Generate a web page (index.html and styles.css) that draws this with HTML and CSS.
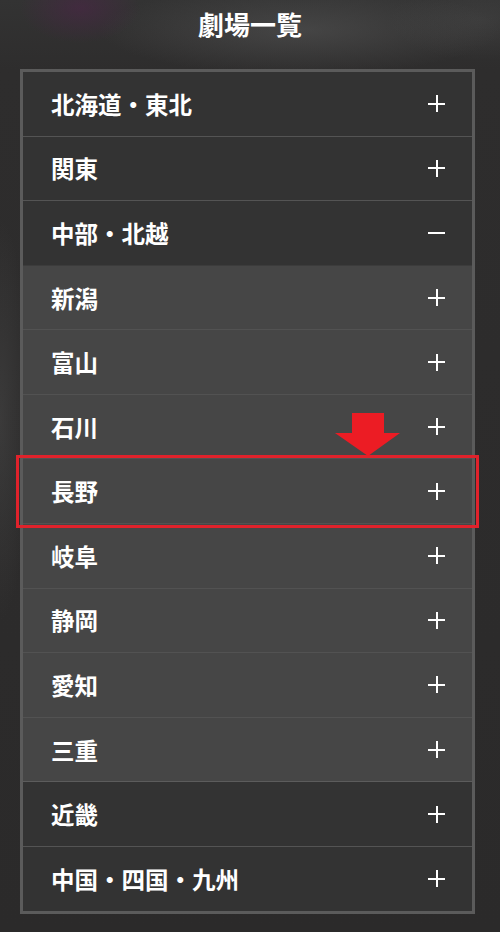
FILE: index.html
```html
<!DOCTYPE html>
<html lang="ja">
<head>
    <meta charset="UTF-8">
    <meta name="viewport" content="width=device-width, initial-scale=1.0">
    <title>劇場一覧</title>
    <link rel="stylesheet" href="styles.css">
</head>
<body>
    <h1 class="title">劇場一覧</h1>

    <div class="theater-list">
        <div class="area">北海道・東北<span class="toggle plus"></span></div>
        <div class="area">関東<span class="toggle plus"></span></div>
        <div class="area">中部・北越<span class="toggle minus"></span></div>
        <div class="sub-list">
            <div class="pref">新潟<span class="toggle plus"></span></div>
            <div class="pref">富山<span class="toggle plus"></span></div>
            <div class="pref">石川<span class="toggle plus"></span></div>
            <div class="pref marked">長野<span class="toggle plus"></span>
                <div class="highlight"></div>
                <svg class="pointer" width="65" height="43" viewBox="0 0 65 43">
                    <polygon points="17,0 49,0 49,20 65,20 33,43 0,20 17,20" fill="#ec1c24"/>
                </svg>
            </div>
            <div class="pref">岐阜<span class="toggle plus"></span></div>
            <div class="pref">静岡<span class="toggle plus"></span></div>
            <div class="pref">愛知<span class="toggle plus"></span></div>
            <div class="pref">三重<span class="toggle plus"></span></div>
        </div>
        <div class="area">近畿<span class="toggle plus"></span></div>
        <div class="area">中国・四国・九州<span class="toggle plus"></span></div>
    </div>
</body>
</html>
```

FILE: styles.css
```css
body {
    margin: 0;
    min-height: 932px;
    font-family: "Noto Sans CJK JP", "Noto Sans", sans-serif;
    color: #fff;
    background-color: #2c2b2b;
    background-image:
        radial-gradient(ellipse 60px 35px at 80px 8px, rgba(80, 35, 75, 0.5), transparent),
        radial-gradient(ellipse 200px 45px at 300px 30px, rgba(90, 90, 90, 0.5), transparent),
        radial-gradient(ellipse 90px 40px at 480px 20px, rgba(80, 80, 80, 0.35), transparent),
        radial-gradient(ellipse 30px 200px at 0 420px, rgba(80, 80, 80, 0.4), transparent),
        linear-gradient(#333 0, #2e2d2d 70px, #2b2a2a 100%);
    overflow: hidden;
}
.title {
    margin: 0;
    padding: 7px 0 0;
    height: 69px;
    box-sizing: border-box;
    text-align: center;
    font-size: 26px;
    line-height: 34px;
    font-weight: 700;
}
.theater-list {
    width: 455px;
    margin-left: 20px;
    box-sizing: border-box;
    border: 3px solid #5b5b5b;
    background: #333;
}
.area,
.pref {
    position: relative;
    display: flex;
    align-items: center;
    justify-content: space-between;
    height: 63.58px;
    padding: 0 27px 0 28px;
    font-size: 23.5px;
    font-weight: 700;
    border-top: 1px solid #545454;
}
.area:first-child {
    border-top: none;
}
.area {
    background: #333;
}
.pref {
    background: #464646;
    border-top-color: #525252;
}
.pref.marked {
    z-index: 1;
}
.sub-list {
    border-bottom: 1px solid #5c5c5c;
}
.sub-list .pref:first-child {
    border-top-color: #3c3c3c;
}
.sub-list + .area {
    border-top: none;
}
.toggle {
    position: relative;
    width: 17px;
    height: 17px;
}
.toggle::before,
.toggle::after {
    content: "";
    position: absolute;
    background: #fff;
}
.toggle::before {
    left: 0;
    right: 0;
    top: 7.5px;
    height: 2px;
}
.plus::after {
    top: 0;
    bottom: 0;
    left: 7.5px;
    width: 2px;
}
.highlight {
    position: absolute;
    top: -4px;
    bottom: -5px;
    left: -7px;
    right: -7px;
    border: 3px solid #e0222b;
}
.pointer {
    position: absolute;
    left: 312px;
    top: -46px;
}
```
